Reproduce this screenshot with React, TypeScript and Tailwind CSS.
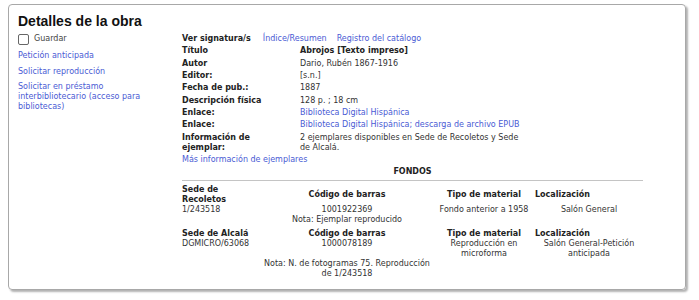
import React from 'react';

const LINK = 'text-[#4a5bd4]';

type Field = { label: string; value: React.ReactNode };

const fields: Field[] = [
  { label: 'Título', value: <span className="font-bold text-[#222]">Abrojos [Texto impreso]</span> },
  { label: 'Autor', value: 'Dario, Rubén 1867-1916' },
  { label: 'Editor:', value: '[s.n.]' },
  { label: 'Fecha de pub.:', value: '1887' },
  { label: 'Descripción física', value: '128 p. ; 18 cm' },
  { label: 'Enlace:', value: <span className={LINK}>Biblioteca Digital Hispánica</span> },
  { label: 'Enlace:', value: <span className={LINK}>Biblioteca Digital Hispánica; descarga de archivo EPUB</span> },
  { label: 'Información de ejemplar:', value: '2 ejemplares disponibles en Sede de Recoletos y Sede de Alcalá.' },
];

type Holding = {
  sede: string;
  signatura: string;
  barcode: string;
  material: string;
  location: string;
  note: string;
};

const holdings: Holding[] = [
  {
    sede: 'Sede de Recoletos',
    signatura: '1/243518',
    barcode: '1001922369',
    material: 'Fondo anterior a 1958',
    location: 'Salón General',
    note: 'Nota: Ejemplar reproducido',
  },
  {
    sede: 'Sede de Alcalá',
    signatura: 'DGMICRO/63068',
    barcode: '1000078189',
    material: 'Reproducción en microforma',
    location: 'Salón General-Petición anticipada',
    note: 'Nota: N. de fotogramas 75. Reproducción de 1/243518',
  },
];

const HoldingBlock: React.FC<{ h: Holding }> = ({ h }) => (
  <div className="mt-[4px]">
    <div className="grid grid-cols-[79px_172px_102px_1fr] items-center font-bold text-[#222]">
      <div>{h.sede}</div>
      <div className="text-center">Código de barras</div>
      <div className="text-center">Tipo de material</div>
      <div>Localización</div>
    </div>
    <div className="grid grid-cols-[79px_172px_102px_1fr] items-start">
      <div>{h.signatura}</div>
      <div className="text-center">{h.barcode}</div>
      <div className="text-center">{h.material}</div>
      <div className="text-center">{h.location}</div>
    </div>
    <div className="grid grid-cols-[79px_172px_102px_1fr]">
      <div />
      <div className="text-center">{h.note}</div>
    </div>
  </div>
);

export default function App() {
  return (
    <div className="bg-white w-[699px] h-[300px] pl-[8px] pt-[4px] font-['DejaVu_Sans',sans-serif]">
      <div className="w-[678px] h-[286px] border border-[#a8a8a8] rounded-[4px] shadow-[2px_2px_2px_rgba(0,0,0,0.3)] pl-[9px] pt-[8px]">
        <h1 className="font-['Liberation_Sans',Arial,sans-serif] font-bold text-[14px] leading-[16px] text-[#111]">
          Detalles de la obra
        </h1>

        <div className="flex mt-[4px] text-[8px] leading-[10px] text-[#333]">
          {/* acciones */}
          <div className="w-[164px] shrink-0">
            <label className="flex items-center h-[12px] gap-[5px]">
              <span className="w-[11px] h-[11px] border border-[#666] rounded-[2px] bg-white" />
              <span className="text-[#444]">Guardar</span>
            </label>
            <div className={`${LINK} w-[150px]`}>
              <div className="mt-[6px]">Petición anticipada</div>
              <div className="mt-[6px]">Solicitar reproducción</div>
              <div className="mt-[5px]">Solicitar en préstamo interbibliotecario (acceso para bibliotecas)</div>
            </div>
          </div>

          {/* ficha */}
          <div className="w-[461px]">
            <div className="flex items-center h-[12px]">
              <span className="font-bold text-[#222]">Ver signatura/s</span>
              <span className={`${LINK} ml-[12px]`}>Índice/Resumen</span>
              <span className={`${LINK} ml-[10px]`}>Registro del catálogo</span>
            </div>
            {fields.map((f, i) => (
              <div key={i} className="flex py-[1.2px]">
                <div className="w-[118px] shrink-0 pr-[8px] font-bold text-[#222]">{f.label}</div>
                <div className="w-[222px]">{f.value}</div>
              </div>
            ))}
            <div className={`${LINK} mt-[1px]`}>Más información de ejemplares</div>

            <div className="mt-[2px] text-center font-bold text-[#222]">FONDOS</div>
            <div className="mt-[3px] border-t border-[#c4c4c4]" />
            {holdings.map((h) => (
              <HoldingBlock key={h.signatura} h={h} />
            ))}
          </div>
        </div>
      </div>
    </div>
  );
}
